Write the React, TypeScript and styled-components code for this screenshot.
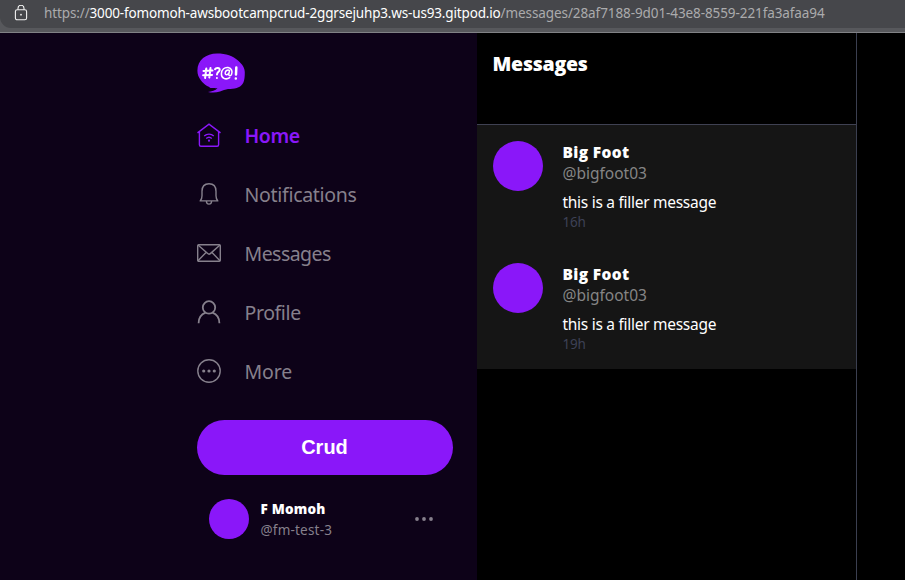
import React from "react";
import styled, { createGlobalStyle } from "styled-components";

const GlobalStyle = createGlobalStyle`
  * { box-sizing: border-box; }
  body {
    margin: 0;
    background: #000;
    font-family: "Noto Sans", "Open Sans", sans-serif;
    overflow: hidden;
  }
`;

const Window = styled.div`
  width: 905px;
  height: 580px;
  display: flex;
  flex-direction: column;
  overflow: hidden;
`;

const BrowserBar = styled.div`
  flex: none;
  height: 33px;
  background: #57585c;
  border-bottom: 1px solid #818286;
`;

const AddressField = styled.div`
  height: 28px;
  padding-left: 14px;
  display: flex;
  align-items: flex-start;
  background: #46474b;
  border-bottom-left-radius: 11px;
`;

const LockIcon = styled.svg`
  flex: none;
  width: 14px;
  height: 16px;
  margin-top: 5px;
`;

const Url = styled.div`
  margin-left: 16px;
  height: 28px;
  line-height: 27px;
  font-size: 13.5px;
  white-space: nowrap;
`;

const UrlPart = styled.span<{ $spacing: number; $host?: boolean }>`
  letter-spacing: ${(p) => p.$spacing}px;
  color: ${(p) => (p.$host ? "#ffffff" : "#ababad")};
`;

const Page = styled.div`
  flex: 1;
  display: flex;
`;

const Sidebar = styled.aside`
  width: 477px;
  padding: 20px 24px 0 197px;
  background: #0d0218;
`;

const Logo = styled.svg`
  display: block;
  width: 48px;
  height: 40px;
`;

const Nav = styled.nav`
  margin-top: 13px;
`;

const NavItem = styled.div<{ $active?: boolean }>`
  height: 59px;
  display: flex;
  align-items: center;
  gap: 23.5px;
  color: ${(p) => (p.$active ? "#8a17f9" : "#86808c")};
  font-weight: ${(p) => (p.$active ? 600 : 400)};
`;

const NavIcon = styled.svg<{ $stroke?: number }>`
  width: 24px;
  height: 24px;
  margin-bottom: 2px;
  fill: none;
  stroke: currentColor;
  stroke-width: ${(p) => p.$stroke ?? 1.4};
`;

const NavLabel = styled.span<{ $spacing: number }>`
  font-size: 19.5px;
  line-height: 27px;
  letter-spacing: ${(p) => p.$spacing}px;
`;

const CrudButton = styled.button`
  display: block;
  width: 256px;
  height: 55px;
  margin-top: 19px;
  padding: 0 1px 0 0;
  border: 0;
  border-radius: 28px;
  background: #8a17f9;
  color: #fff;
  font: bold 20px/53px "Liberation Sans", Arial, sans-serif;
`;

const Account = styled.div`
  display: flex;
  align-items: center;
  height: 40px;
  margin-top: 24px;
  padding: 0 20px 0 12px;
`;

const Avatar = styled.div<{ $size: number }>`
  flex: none;
  width: ${(p) => p.$size}px;
  height: ${(p) => p.$size}px;
  border-radius: 50%;
  background: #8a17f9;
`;

const AccountText = styled.div`
  flex: 1;
  margin-left: 11.5px;
  padding-top: 2px;
`;

const AccountName = styled.div`
  color: #fff;
  font-family: "Open Sans", "Noto Sans", sans-serif;
  font-size: 13.5px;
  font-weight: 800;
  line-height: 20px;
  letter-spacing: 0.2px;
`;

const AccountHandle = styled.div`
  color: #86808c;
  font-size: 13.5px;
  line-height: 22px;
  letter-spacing: 0.2px;
`;

const Ellipsis = styled.svg`
  width: 18px;
  height: 4px;
  fill: #86808c;
`;

const Feed = styled.main`
  width: 380px;
  border-right: 1px solid #3b3f50;
`;

const FeedHeader = styled.header`
  height: 92px;
  padding: 16px 15.5px;
  border-bottom: 1px solid #3f4152;
`;

const Title = styled.h1`
  margin: 0;
  color: #fff;
  font-family: "Open Sans", "Noto Sans", sans-serif;
  font-size: 19.5px;
  font-weight: 800;
  line-height: 30px;
  letter-spacing: -0.25px;
`;

const Conversation = styled.article`
  display: flex;
  gap: 19.5px;
  height: 122px;
  padding: 16px;
  background: #151515;
`;

const ConversationText = styled.div`
  display: flex;
  flex-direction: column;
`;

const Name = styled.div`
  color: #fff;
  font-family: "Open Sans", "Noto Sans", sans-serif;
  font-size: 15.5px;
  font-weight: 800;
  line-height: 22px;
  letter-spacing: 0.35px;
`;

const Handle = styled.div`
  color: #858585;
  font-size: 15.5px;
  line-height: 21px;
  letter-spacing: 0;
`;

const Message = styled.div`
  margin-top: 8px;
  color: #fff;
  font-size: 15.5px;
  line-height: 21px;
  letter-spacing: -0.28px;
`;

const Time = styled.div`
  color: #3d4155;
  font-size: 13.5px;
  line-height: 19px;
  letter-spacing: -0.2px;
`;

const conversations = [
  { id: 1, time: "16h" },
  { id: 2, time: "19h" },
];

export default function App() {
  return (
    <Window>
      <GlobalStyle />
      <BrowserBar>
        <AddressField>
          <LockIcon viewBox="0 0 14 16" fill="none" stroke="#f2f2f2" strokeWidth="1.1">
            <rect x="1.4" y="4.8" width="11.2" height="10" rx="1.8" />
            <path d="M4 4.800V3.300a3 3 0 0 1 6 0v1.500" />
            <circle cx="7" cy="9.7" r="0.9" fill="#f2f2f2" stroke="none" />
          </LockIcon>
          <Url>
            <UrlPart $spacing={-0.12}>https://</UrlPart>
            <UrlPart $spacing={-0.16} $host>3000-fomomoh-awsbootcampcrud-2ggrsejuhp3.ws-us93.gitpod.io</UrlPart>
            <UrlPart $spacing={-0.09}>/messages/28af7188-9d01-43e8-8559-221fa3afaa94</UrlPart>
          </Url>
        </AddressField>
      </BrowserBar>
      <Page>
        <Sidebar>
          <Logo viewBox="0 0 48 40">
            <path
              fill="#8a17f9"
              d="M.4 17.500C.4 7 9 .4 20 .4c9 0 16 2.600 21 7 4.500 4 6.800 7.100 6.800 12.100 0 4-.3 9-2.300 11.500-2.500 4-8 5-14.500 5-2.500.4-5.500 1.600-8 2.600-4 1.200-8.500 1.200-12 .4 3.500-.6 7.500-1.300 9.500-3.800-3.500-.2-5.500-.4-7-.2-1.500-1.500-6.500-3-9.500-7.500-2.500-3.500-3.600-6-3.600-10Z"
            />
            <g fill="none" stroke="#fff" strokeWidth="2" strokeLinecap="round" strokeLinejoin="round">
              <path d="M9.300 15.500 8.100 25M13.500 15 12.300 24.500M6.500 18l9-.4M6.100 22.300l9-.4" />
              <path d="M18 16.200c1-1.900 5-1.800 4.700.8-.2 1.800-2.700 2-2.700 4.500M19.900 25v.1" />
              <path strokeWidth="1.500" d="M32.700 24.700c-4 2.600-8.500.5-8.300-4 .2-4.400 3.300-6.700 6.700-6.200 3.600.6 4.700 4 3.400 7-1 1.900-3 1.300-2.700-.4l.7-3.600c-2-1.100-4.200.2-4.300 2.600-.1 2.200 2.500 2.200 3.400.2" />
              <path strokeWidth="2.500" d="m39.300 14.500-.3 7M38.800 25.500v.1" />
            </g>
          </Logo>
          <Nav>
            <NavItem $active>
              <NavIcon viewBox="0 0 24 24">
                <path d="M.5 9.900 12 1.100l11.500 8.800M2.400 8.700v13.100c0 .9.600 1.500 1.500 1.500h16.200c.9 0 1.500-.6 1.500-1.500V8.700" />
                <path d="M7.200 13c2.700-2.500 6.900-2.500 9.600 0M9.200 15.500c1.600-1.500 4-1.500 5.600 0" />
                <circle cx="12" cy="17.700" r="1.100" fill="currentColor" stroke="none" />
              </NavIcon>
              <NavLabel $spacing={-0.4}>Home</NavLabel>
            </NavItem>
            <NavItem>
              <NavIcon viewBox="0 0 24 24">
                <path strokeLinejoin="round" d="M3.200 18.900c1.300-1.400 1.800-2.600 1.800-5.200V9.200c0-4.500 2.600-7.500 7-7.500s7 3 7 7.500v4.500c0 2.600.5 3.800 1.800 5.200ZM9.400 19.200c.1 1.900 1 2.900 2.600 2.900s2.500-1 2.600-2.900" />
              </NavIcon>
              <NavLabel $spacing={-0.3}>Notifications</NavLabel>
            </NavItem>
            <NavItem>
              <NavIcon viewBox="0 0 24 24">
                <rect x=".7" y="3.700" width="22.600" height="16.500" rx="1" />
                <path d="m1 4 9.700 8.600c.8.700 1.800.7 2.600 0L23 4M1 19.800l8-8.300M23 19.800l-8-8.300" />
              </NavIcon>
              <NavLabel $spacing={-0.55}>Messages</NavLabel>
            </NavItem>
            <NavItem>
              <NavIcon viewBox="0 0 24 24" $stroke={1.8}>
                <circle cx="12" cy="7.400" r="6.200" />
                <path d="M1.600 23.200c0-5.300 3-9 7-10.500M22.400 23.200c0-5.300-3-9-7-10.500" />
              </NavIcon>
              <NavLabel $spacing={-0.4}>Profile</NavLabel>
            </NavItem>
            <NavItem>
              <NavIcon viewBox="0 0 24 24">
                <circle cx="12" cy="12" r="11.200" />
                <g fill="currentColor" stroke="none">
                  <circle cx="6.700" cy="12" r="1.600" />
                  <circle cx="12" cy="12" r="1.600" />
                  <circle cx="17.300" cy="12" r="1.600" />
                </g>
              </NavIcon>
              <NavLabel $spacing={-0.1}>More</NavLabel>
            </NavItem>
          </Nav>
          <CrudButton>Crud</CrudButton>
          <Account>
            <Avatar $size={40} />
            <AccountText>
              <AccountName>F Momoh</AccountName>
              <AccountHandle>@fm-test-3</AccountHandle>
            </AccountText>
            <Ellipsis viewBox="0 0 18 4">
              <circle cx="2" cy="2" r="1.900" />
              <circle cx="9" cy="2" r="1.900" />
              <circle cx="16" cy="2" r="1.900" />
            </Ellipsis>
          </Account>
        </Sidebar>
        <Feed>
          <FeedHeader>
            <Title>Messages</Title>
          </FeedHeader>
          {conversations.map((c) => (
            <Conversation key={c.id}>
              <Avatar $size={50} />
              <ConversationText>
                <Name>Big Foot</Name>
                <Handle>@bigfoot03</Handle>
                <Message>this is a filler message</Message>
                <Time>{c.time}</Time>
              </ConversationText>
            </Conversation>
          ))}
        </Feed>
      </Page>
    </Window>
  );
}
